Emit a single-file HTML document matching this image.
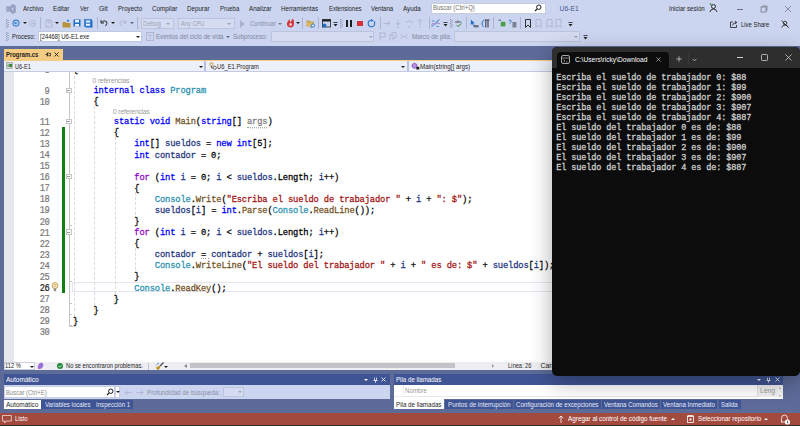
<!DOCTYPE html>
<html><head><meta charset="utf-8">
<style>
*{margin:0;padding:0;box-sizing:border-box}
html,body{width:800px;height:426px;overflow:hidden;background:#ccd5f0;font-family:"Liberation Sans",sans-serif;position:relative}
.a{position:absolute;white-space:pre}
.ui{font-size:6.8px;color:#1e1e1e;line-height:8px}
.code{font-family:"Liberation Mono",monospace;font-size:8.8px;letter-spacing:-0.16px;transform:scaleY(1.12);transform-origin:0 8.4px;line-height:11px;color:#000;-webkit-text-stroke:0.25px currentColor}
.k{color:#0000ff}.t{color:#2b91af}.m{color:#74531f}.c{color:#8f08c4}.v{color:#1f377f}.s{color:#a31515}.p{color:#808080}
.ln{font-family:"Liberation Mono",monospace;font-size:8.8px;letter-spacing:-0.45px;transform:scaleY(1.22);transform-origin:0 8.4px;color:#7a7a7a;-webkit-text-stroke:0.2px currentColor;text-align:right;width:40px;line-height:11px}
.hint{font-size:6.6px;color:#999999;line-height:8px}
.con{font-family:"Liberation Mono",monospace;font-size:8.5px;letter-spacing:-0.1px;color:#cccccc;line-height:10px;-webkit-text-stroke:0.3px #cccccc}
</style></head><body>
<div class="a ui" style="left:22.50px;top:4.5px;;transform:scaleX(0.9040);transform-origin:0 0">Archivo</div>
<div class="a ui" style="left:53.25px;top:4.5px;;transform:scaleX(0.9156);transform-origin:0 0">Editar</div>
<div class="a ui" style="left:80.00px;top:4.5px;;transform:scaleX(0.8578);transform-origin:0 0">Ver</div>
<div class="a ui" style="left:98.75px;top:4.5px;;transform:scaleX(1.0053);transform-origin:0 0">Git</div>
<div class="a ui" style="left:117.50px;top:4.5px;;transform:scaleX(0.9040);transform-origin:0 0">Proyecto</div>
<div class="a ui" style="left:151.75px;top:4.5px;;transform:scaleX(0.9283);transform-origin:0 0">Compilar</div>
<div class="a ui" style="left:187.00px;top:4.5px;;transform:scaleX(0.9153);transform-origin:0 0">Depurar</div>
<div class="a ui" style="left:219.50px;top:4.5px;;transform:scaleX(0.8764);transform-origin:0 0">Prueba</div>
<div class="a ui" style="left:248.75px;top:4.5px;;transform:scaleX(0.9153);transform-origin:0 0">Analizar</div>
<div class="a ui" style="left:281.25px;top:4.5px;;transform:scaleX(0.9069);transform-origin:0 0">Herramientas</div>
<div class="a ui" style="left:328.75px;top:4.5px;;transform:scaleX(0.8770);transform-origin:0 0">Extensiones</div>
<div class="a ui" style="left:370.75px;top:4.5px;;transform:scaleX(0.8904);transform-origin:0 0">Ventana</div>
<div class="a ui" style="left:403.00px;top:4.5px;;transform:scaleX(0.9256);transform-origin:0 0">Ayuda</div>
<svg class="a" style="left:5px;top:3px" width="12" height="12" viewBox="0 0 12 12"><path d="M1.2 4.2 L2.8 2.8 L4.5 3.8 L7.5 1 L10.8 2.5 V9.5 L7.5 11 L4.5 8.2 L2.8 9.2 L1.2 7.8Z M2.6 5 V7 L3.6 6Z M8.2 4.3 L6.3 6 L8.2 7.7Z" fill="#98a1c4" fill-rule="evenodd"/></svg>
<div class="a" style="left:431px;top:2.6px;width:114.6px;height:11.6px;background:#ffffff;border:1px solid #c5cbdc"></div>
<div class="a ui" style="left:433.40px;top:4.3px;color:#717171;transform:scaleX(0.8824);transform-origin:0 0">Buscar (Ctrl+Q)</div>
<svg class="a" style="left:534px;top:4px" width="8" height="8" viewBox="0 0 8 8"><circle cx="4.8" cy="3.2" r="2.2" fill="none" stroke="#1e1e1e" stroke-width="1"/><path d="M3.2 4.8 L1 7" stroke="#1e1e1e" stroke-width="1.2"/></svg>
<div class="a ui" style="left:559.50px;top:4.5px;color:#45568c">U6-E1</div>
<div class="a ui" style="left:668.75px;top:4.5px;;transform:scaleX(0.9010);transform-origin:0 0">Iniciar sesión</div>
<svg class="a" style="left:709px;top:3px" width="9" height="10" viewBox="0 0 9 10"><circle cx="4.5" cy="3.5" r="2" fill="none" stroke="#1e1e1e" stroke-width=".9"/><path d="M1 9 Q1.5 6 4.5 6 Q7.5 6 8 9" fill="none" stroke="#1e1e1e" stroke-width=".9"/><path d="M1 0.5 L2.5 2" stroke="#388a34" stroke-width="1.2"/></svg>
<div class="a" style="left:737px;top:8.6px;width:5.5px;height:0.7px;background:#6a6f80;"></div>
<svg class="a" style="left:760px;top:5px" width="8" height="8" viewBox="0 0 8 8"><rect x="1" y="2" width="5" height="5" fill="none" stroke="#6a6f80" stroke-width=".7"/><path d="M2.5 2 V1 H7 V5.5 H6" fill="none" stroke="#6a6f80" stroke-width=".7"/></svg>
<svg class="a" style="left:784px;top:5px" width="8" height="8" viewBox="0 0 8 8"><path d="M1 1 L7 7 M7 1 L1 7" stroke="#6a6f80" stroke-width=".7"/></svg>
<svg class="a" style="left:5.5px;top:19px" width="3" height="9" viewBox="0 0 3 9"><rect x="0.0" y="0.0" width="1.2" height="1" fill="#8c95b4"/><rect x="1.5" y="1.0" width="1.2" height="1" fill="#8c95b4"/><rect x="0.0" y="2.0" width="1.2" height="1" fill="#8c95b4"/><rect x="1.5" y="3.0" width="1.2" height="1" fill="#8c95b4"/><rect x="0.0" y="4.0" width="1.2" height="1" fill="#8c95b4"/><rect x="1.5" y="5.0" width="1.2" height="1" fill="#8c95b4"/><rect x="0.0" y="6.0" width="1.2" height="1" fill="#8c95b4"/><rect x="1.5" y="7.0" width="1.2" height="1" fill="#8c95b4"/><rect x="0.0" y="8.0" width="1.2" height="1" fill="#8c95b4"/></svg>
<svg class="a" style="left:11.5px;top:19px" width="8" height="8" viewBox="0 0 8 8"><circle cx="4" cy="4" r="3.5" fill="#1f6fc5"/><circle cx="4" cy="4" r="2.6" fill="#ccd5f0"/><path d="M5.5 4 H2.5 M4 2.5 L2.5 4 L4 5.5" stroke="#1f6fc5" stroke-width=".9" fill="none"/></svg>
<div class="a" style="left:22.5px;top:22px;width:0;height:0;border-left:2px solid transparent;border-right:2px solid transparent;border-top:2.5px solid #1e1e1e"></div>
<svg class="a" style="left:29px;top:19.5px" width="7" height="7" viewBox="0 0 7 7"><circle cx="3.5" cy="3.5" r="3" fill="none" stroke="#a9b0c6" stroke-width=".7"/><path d="M2 3.5 H5 M3.8 2.3 L5 3.5 L3.8 4.7" stroke="#a9b0c6" stroke-width=".7" fill="none"/></svg>
<div class="a" style="left:40px;top:17px;width:1px;height:12px;background:#aab3d0;"></div>
<svg class="a" style="left:45px;top:18.5px" width="8" height="9" viewBox="0 0 8 9"><path d="M1 1 H6 L7 2 V8 H1Z" fill="none" stroke="#a9b0c6" stroke-width=".8"/><path d="M3 1 V4 H5 V1" fill="none" stroke="#a9b0c6" stroke-width=".7"/></svg>
<div class="a" style="left:55px;top:22px;width:0;height:0;border-left:2px solid transparent;border-right:2px solid transparent;border-top:2.5px solid #1e1e1e"></div>
<svg class="a" style="left:62px;top:18.5px" width="9" height="9" viewBox="0 0 9 9"><path d="M0.5 3 H3.5 L4.5 4 H8.5 V8.5 H0.5Z" fill="#b8913a"/><path d="M6 0.5 V3 M4.8 1.8 H7.2" stroke="#1f6fc5" stroke-width=".9"/></svg>
<svg class="a" style="left:73px;top:19px" width="8" height="8" viewBox="0 0 8 8"><rect x=".5" y=".5" width="7" height="7" fill="#1f6fc5"/><rect x="2" y="1" width="4" height="2.5" fill="#e8eefc"/><rect x="2" y="5" width="4" height="2.5" fill="#e8eefc"/></svg>
<svg class="a" style="left:84px;top:19px" width="9" height="9" viewBox="0 0 9 9"><rect x="1.5" y="1.5" width="7" height="7" fill="#1f6fc5"/><rect x=".5" y=".5" width="7" height="7" fill="#3a82d0" stroke="#1f6fc5" stroke-width=".6"/><rect x="2" y="1.5" width="4" height="2" fill="#e8eefc"/><rect x="2" y="4.8" width="4" height="2" fill="#e8eefc"/></svg>
<div class="a" style="left:96.5px;top:17px;width:1px;height:12px;background:#aab3d0;"></div>
<svg class="a" style="left:100px;top:19px" width="8" height="8" viewBox="0 0 8 8"><path d="M1 1 V4 H4" fill="none" stroke="#1e1e1e" stroke-width=".9"/><path d="M1.3 3.7 Q4 0.5 6.5 2.5 Q7.8 4.5 5.5 7" fill="none" stroke="#1e1e1e" stroke-width=".9"/></svg>
<div class="a" style="left:111px;top:22px;width:0;height:0;border-left:2px solid transparent;border-right:2px solid transparent;border-top:2.5px solid #1e1e1e"></div>
<svg class="a" style="left:119px;top:19px" width="8" height="8" viewBox="0 0 8 8"><path d="M7 1 V4 H4" fill="none" stroke="#a9b0c6" stroke-width=".8"/><path d="M6.7 3.7 Q4 0.5 1.5 2.5 Q.2 4.5 2.5 7" fill="none" stroke="#a9b0c6" stroke-width=".8"/></svg>
<div class="a" style="left:130px;top:22px;width:0;height:0;border-left:2px solid transparent;border-right:2px solid transparent;border-top:2.5px solid #5a6078"></div>
<div class="a" style="left:136.5px;top:17px;width:1px;height:12px;background:#aab3d0;"></div>
<div class="a" style="left:141.25px;top:18.1px;width:33.15px;height:10.9px;background:#d5dcf2;border:1px solid #bcc4dc"></div>
<div class="a ui" style="left:143.10px;top:19.5px;color:#9aa2b8;transform:scaleX(0.8938);transform-origin:0 0">Debug</div>
<div class="a" style="left:166px;top:22.5px;width:0;height:0;border-left:2px solid transparent;border-right:2px solid transparent;border-top:2.5px solid #9aa2b8"></div>
<div class="a" style="left:178.4px;top:18.1px;width:56.6px;height:10.9px;background:#d5dcf2;border:1px solid #bcc4dc"></div>
<div class="a ui" style="left:180.60px;top:19.5px;color:#9aa2b8;transform:scaleX(0.8408);transform-origin:0 0">Any CPU</div>
<div class="a" style="left:227px;top:22.5px;width:0;height:0;border-left:2px solid transparent;border-right:2px solid transparent;border-top:2.5px solid #9aa2b8"></div>
<div class="a" style="left:240px;top:19.5px;width:0;height:0;border-top:4px solid transparent;border-bottom:4px solid transparent;border-left:5.5px solid #aab1c8"></div>
<div class="a ui" style="left:250.00px;top:19.5px;color:#8a90a6;transform:scaleX(0.8786);transform-origin:0 0">Continuar</div>
<div class="a" style="left:278.3px;top:22.5px;width:0;height:0;border-left:2px solid transparent;border-right:2px solid transparent;border-top:2.5px solid #70768a"></div>
<svg class="a" style="left:285.5px;top:18px" width="9" height="10" viewBox="0 0 9 10"><path d="M4.5 9.5 Q0.5 9 1 5.5 Q1.5 3 3.5 1 Q3.5 4 5 4 Q5 2 7 .5 Q8.5 3.5 8 6 Q7.5 9.5 4.5 9.5Z" fill="#d13438"/><circle cx="4.6" cy="6.5" r="1.4" fill="#f3c4c4"/></svg>
<div class="a" style="left:295.75px;top:22px;width:0;height:0;border-left:2px solid transparent;border-right:2px solid transparent;border-top:2.5px solid #1e1e1e"></div>
<div class="a" style="left:302.25px;top:17px;width:1px;height:12px;background:#aab3d0;"></div>
<svg class="a" style="left:306px;top:18.5px" width="10" height="10" viewBox="0 0 10 10"><path d="M.5 1.5 H3.5 L4.5 2.5 H8 V7.5 H.5Z" fill="#c4a050"/><path d="M.5 3.5 H8 V7.5 H.5Z" fill="#d8b868"/><circle cx="7" cy="6.5" r="1.6" fill="#e8eefc" stroke="#1f6fc5" stroke-width=".9"/><path d="M5.8 7.8 L4.8 8.9" stroke="#1f6fc5" stroke-width="1"/></svg>
<div class="a" style="left:318.4px;top:17px;width:1px;height:12px;background:#aab3d0;"></div>
<svg class="a" style="left:322px;top:18.5px" width="9" height="9" viewBox="0 0 9 9"><rect x=".5" y=".5" width="8" height="7.5" fill="none" stroke="#1e1e1e" stroke-width=".8"/><rect x=".5" y=".5" width="8" height="2" fill="#1e1e1e"/><circle cx="2.5" cy="6.5" r="2" fill="#1f6fc5"/></svg>
<svg class="a" style="left:333px;top:22px" width="5" height="6" viewBox="0 0 5 6"><rect x=".5" y="0" width="4" height=".8" fill="#1e1e1e"/><path d="M.5 2 H4.5 L2.5 4.5Z" fill="#1e1e1e"/></svg>
<svg class="a" style="left:339.5px;top:19px" width="3" height="9" viewBox="0 0 3 9"><rect x="0.0" y="0.0" width="1.2" height="1" fill="#8c95b4"/><rect x="1.5" y="1.0" width="1.2" height="1" fill="#8c95b4"/><rect x="0.0" y="2.0" width="1.2" height="1" fill="#8c95b4"/><rect x="1.5" y="3.0" width="1.2" height="1" fill="#8c95b4"/><rect x="0.0" y="4.0" width="1.2" height="1" fill="#8c95b4"/><rect x="1.5" y="5.0" width="1.2" height="1" fill="#8c95b4"/><rect x="0.0" y="6.0" width="1.2" height="1" fill="#8c95b4"/><rect x="1.5" y="7.0" width="1.2" height="1" fill="#8c95b4"/><rect x="0.0" y="8.0" width="1.2" height="1" fill="#8c95b4"/></svg>
<div class="a" style="left:346.3px;top:20.3px;width:1.8px;height:6.3px;background:#1e1e1e;"></div>
<div class="a" style="left:349.8px;top:20.3px;width:1.8px;height:6.3px;background:#1e1e1e;"></div>
<div class="a" style="left:357.4px;top:20.6px;width:5.6px;height:5.6px;background:#d13438;"></div>
<svg class="a" style="left:367px;top:18.5px" width="9" height="9" viewBox="0 0 9 9"><path d="M6.8 2.2 A3.3 3.3 0 1 1 4.5 1.2" fill="none" stroke="#1f6fc5" stroke-width="1.1"/><path d="M4 .0 L6.5 1.2 L4.3 3Z" fill="#1f6fc5"/></svg>
<div class="a" style="left:379.7px;top:17px;width:1px;height:12px;background:#aab3d0;"></div>
<svg class="a" style="left:383px;top:19.5px" width="8" height="7" viewBox="0 0 8 7"><path d="M.5 3.5 H7 M4.5 1 L7 3.5 L4.5 6" fill="none" stroke="#a9b0c6" stroke-width=".8"/></svg>
<svg class="a" style="left:395px;top:18.5px" width="6" height="9" viewBox="0 0 6 9"><path d="M3 .5 V6 M1 4 L3 6 L5 4" fill="none" stroke="#a9b0c6" stroke-width=".8"/><circle cx="3" cy="8" r=".8" fill="#a9b0c6"/></svg>
<svg class="a" style="left:405px;top:18.5px" width="8" height="9" viewBox="0 0 8 9"><path d="M1 4 Q4 0 7 4 M5.5 2.5 L7 4 L7.2 2" fill="none" stroke="#a9b0c6" stroke-width=".8"/><circle cx="4" cy="8" r=".8" fill="#a9b0c6"/></svg>
<svg class="a" style="left:417px;top:18.5px" width="6" height="9" viewBox="0 0 6 9"><path d="M3 6 V.5 M1 2.5 L3 .5 L5 2.5" fill="none" stroke="#a9b0c6" stroke-width=".8"/><circle cx="3" cy="8" r=".8" fill="#a9b0c6"/></svg>
<div class="a" style="left:428.75px;top:17px;width:1px;height:12px;background:#aab3d0;"></div>
<svg class="a" style="left:431px;top:18.5px" width="9" height="9" viewBox="0 0 9 9"><path d="M.5 6 L2.5 4 L4 5.5 L6 3.5 L7.5 5 L8.5 4" fill="none" stroke="#8f4fc4" stroke-width=".8"/><path d="M.5 8 L3 5.5 M4.5 4 L8.5 .5" fill="none" stroke="#1f6fc5" stroke-width=".9"/><path d="M1 2 H3.5 M5.5 7.5 H8" stroke="#1f6fc5" stroke-width=".7"/></svg>
<svg class="a" style="left:443px;top:22px" width="5" height="6" viewBox="0 0 5 6"><rect x=".5" y="0" width="4" height=".8" fill="#1e1e1e"/><path d="M.5 2 H4.5 L2.5 4.5Z" fill="#1e1e1e"/></svg>
<svg class="a" style="left:449.8px;top:19px" width="3" height="9" viewBox="0 0 3 9"><rect x="0.0" y="0.0" width="1.2" height="1" fill="#8c95b4"/><rect x="1.5" y="1.0" width="1.2" height="1" fill="#8c95b4"/><rect x="0.0" y="2.0" width="1.2" height="1" fill="#8c95b4"/><rect x="1.5" y="3.0" width="1.2" height="1" fill="#8c95b4"/><rect x="0.0" y="4.0" width="1.2" height="1" fill="#8c95b4"/><rect x="1.5" y="5.0" width="1.2" height="1" fill="#8c95b4"/><rect x="0.0" y="6.0" width="1.2" height="1" fill="#8c95b4"/><rect x="1.5" y="7.0" width="1.2" height="1" fill="#8c95b4"/><rect x="0.0" y="8.0" width="1.2" height="1" fill="#8c95b4"/></svg>
<svg class="a" style="left:454.5px;top:18.5px" width="8" height="9" viewBox="0 0 8 9"><text x="0" y="4" font-size="4" font-family="Liberation Sans" fill="#1e1e1e">abc</text><path d="M1.5 6 L3 7.5 L6.5 4.5" stroke="#388a34" stroke-width="1" fill="none"/></svg>
<div class="a" style="left:466.25px;top:17px;width:1px;height:12px;background:#aab3d0;"></div>
<svg class="a" style="left:470px;top:18.5px" width="9" height="9" viewBox="0 0 9 9"><path d="M.8 .5 V6 L2.2 4.8 L3.4 7 L4.2 6.6 L3.1 4.4 L4.8 4.3Z" fill="#1f6fc5"/><rect x="3.5" y="6" width="5.2" height="2.6" rx=".8" fill="#6d7388"/></svg>
<svg class="a" style="left:481px;top:18.5px" width="9" height="9" viewBox="0 0 9 9"><path d="M2.8 1.2 Q.8 2.5 1 5 Q1.2 7 2.8 8" fill="none" stroke="#1f6fc5" stroke-width="1"/><path d="M1.8 1 L3.3 .8 L3 2.3Z" fill="#1f6fc5"/><path d="M3.8 1 H8.5 M4.8 1 V8.5 M7 1 V8.5" stroke="#3c3c50" stroke-width="1.1"/></svg>
<div class="a" style="left:493.4px;top:17px;width:1px;height:12px;background:#aab3d0;"></div>
<svg class="a" style="left:497.5px;top:19px" width="8" height="8" viewBox="0 0 8 8"><path d="M.5 1.2 H3" stroke="#3c3c50" stroke-width=".8"/><rect x="2.8" y="2.8" width="4.6" height="4.6" fill="#4aa04a"/></svg>
<svg class="a" style="left:507.5px;top:18.5px" width="9" height="9" viewBox="0 0 9 9"><path d="M.8 1.8 Q1.8 .5 3 1.5 Q3.6 2.5 2.4 3.4 L2 4.6" fill="none" stroke="#1f6fc5" stroke-width=".9"/><rect x="4.4" y="3" width="4" height="5.5" fill="#7d8294"/></svg>
<div class="a" style="left:519.7px;top:17px;width:1px;height:12px;background:#aab3d0;"></div>
<svg class="a" style="left:524.5px;top:18.5px" width="6" height="9" viewBox="0 0 6 9"><path d="M.5 .5 H5.5 V8.5 L3 6 L.5 8.5Z" fill="none" stroke="#1e1e1e" stroke-width=".9"/></svg>
<svg class="a" style="left:534.7px;top:18.5px" width="7" height="9" viewBox="0 0 7 9"><path d="M1 .5 H6 V8.5 L3.5 6 L1 8.5Z" fill="none" stroke="#a9b0c6" stroke-width=".8"/></svg>
<svg class="a" style="left:546px;top:18.5px" width="7" height="9" viewBox="0 0 7 9"><path d="M1 .5 H6 V8.5 L3.5 6 L1 8.5Z" fill="none" stroke="#a9b0c6" stroke-width=".8"/></svg>
<svg class="a" style="left:555px;top:18.5px" width="7" height="9" viewBox="0 0 7 9"><path d="M1 .5 H6 V8.5 L3.5 6 L1 8.5Z" fill="none" stroke="#a9b0c6" stroke-width=".8"/></svg>
<svg class="a" style="left:568px;top:22px" width="5" height="6" viewBox="0 0 5 6"><rect x=".5" y="0" width="4" height=".8" fill="#1e1e1e"/><path d="M.5 2 H4.5 L2.5 4.5Z" fill="#1e1e1e"/></svg>
<svg class="a" style="left:730px;top:20px" width="8" height="8" viewBox="0 0 8 8"><path d="M3 2 H.5 V7.5 H6.5 V5" fill="none" stroke="#1e1e1e" stroke-width=".8"/><path d="M2.5 5.5 Q3 2.5 6.5 2.5 M5 1 L6.8 2.5 L5 4" fill="none" stroke="#1e1e1e" stroke-width=".8"/></svg>
<div class="a ui" style="left:740.50px;top:20.5px;;transform:scaleX(0.8691);transform-origin:0 0">Live Share</div>
<svg class="a" style="left:781px;top:19.5px" width="8" height="8" viewBox="0 0 8 8"><circle cx="4" cy="3" r="1.8" fill="none" stroke="#1e1e1e" stroke-width=".8"/><path d="M.8 7.5 Q1.5 5 4 5 Q6.5 5 7.2 7.5" fill="none" stroke="#1e1e1e" stroke-width=".8"/><path d="M.5 .5 L7.5 7.5" stroke="#1e1e1e" stroke-width=".7"/></svg>
<svg class="a" style="left:5.5px;top:32px" width="3" height="9" viewBox="0 0 3 9"><rect x="0.0" y="0.0" width="1.2" height="1" fill="#8c95b4"/><rect x="1.5" y="1.0" width="1.2" height="1" fill="#8c95b4"/><rect x="0.0" y="2.0" width="1.2" height="1" fill="#8c95b4"/><rect x="1.5" y="3.0" width="1.2" height="1" fill="#8c95b4"/><rect x="0.0" y="4.0" width="1.2" height="1" fill="#8c95b4"/><rect x="1.5" y="5.0" width="1.2" height="1" fill="#8c95b4"/><rect x="0.0" y="6.0" width="1.2" height="1" fill="#8c95b4"/><rect x="1.5" y="7.0" width="1.2" height="1" fill="#8c95b4"/><rect x="0.0" y="8.0" width="1.2" height="1" fill="#8c95b4"/></svg>
<div class="a ui" style="left:11.60px;top:32.5px;;transform:scaleX(0.8611);transform-origin:0 0">Proceso:</div>
<div class="a" style="left:38.4px;top:31.25px;width:103.2px;height:10.5px;background:#ffffff;border:1px solid #c0c8e0"></div>
<div class="a ui" style="left:40.30px;top:32.5px;;transform:scaleX(0.8693);transform-origin:0 0">[24468] U6-E1.exe</div>
<div class="a" style="left:136px;top:36px;width:0;height:0;border-left:2px solid transparent;border-right:2px solid transparent;border-top:2.5px solid #1e1e1e"></div>
<svg class="a" style="left:146px;top:32px" width="8" height="9" viewBox="0 0 8 9"><rect x=".5" y=".5" width="7" height="8" fill="none" stroke="#a9b0c6" stroke-width=".8"/><path d="M2 3 H6 M4 3 V7" stroke="#a9b0c6" stroke-width=".7"/></svg>
<div class="a ui" style="left:156.25px;top:32.5px;color:#80869b;transform:scaleX(0.9016);transform-origin:0 0">Eventos del ciclo de vida</div>
<div class="a" style="left:226.4px;top:36px;width:0;height:0;border-left:2px solid transparent;border-right:2px solid transparent;border-top:2.5px solid #5a6075"></div>
<div class="a ui" style="left:233.00px;top:32.5px;color:#80869b;transform:scaleX(0.8905);transform-origin:0 0">Subproceso:</div>
<div class="a" style="left:270.6px;top:31.25px;width:103.8px;height:10.5px;background:#d5dcf2;border:1px solid #bcc4dc"></div>
<div class="a" style="left:369px;top:36px;width:0;height:0;border-left:2px solid transparent;border-right:2px solid transparent;border-top:2.5px solid #9aa2b8"></div>
<svg class="a" style="left:378.5px;top:32px" width="7" height="9" viewBox="0 0 7 9"><path d="M1 .5 V8.5 M1 1 H6 V5 H1" fill="none" stroke="#a9b0c6" stroke-width=".8"/></svg>
<svg class="a" style="left:389px;top:32px" width="8" height="9" viewBox="0 0 8 9"><path d="M1 8.5 V3 H4 V8.5 M3 3 V.5 H7 V6 H4" fill="none" stroke="#a9b0c6" stroke-width=".8"/></svg>
<svg class="a" style="left:400px;top:33px" width="8" height="7" viewBox="0 0 8 7"><path d="M.5 1 L3 3.5 L.5 6 M7.5 1 L5 3.5 L7.5 6 M3 3.5 H5" fill="none" stroke="#a9b0c6" stroke-width=".8"/></svg>
<div class="a ui" style="left:411.60px;top:32.5px;color:#80869b;transform:scaleX(0.9226);transform-origin:0 0">Marco de pila:</div>
<div class="a" style="left:454px;top:31.25px;width:125.5px;height:10.5px;background:#d5dcf2;border:1px solid #bcc4dc"></div>
<div class="a" style="left:574px;top:36px;width:0;height:0;border-left:2px solid transparent;border-right:2px solid transparent;border-top:2.5px solid #9aa2b8"></div>
<svg class="a" style="left:583px;top:35px" width="5" height="6" viewBox="0 0 5 6"><rect x=".5" y="0" width="4" height=".8" fill="#1e1e1e"/><path d="M.5 2 H4.5 L2.5 4.5Z" fill="#1e1e1e"/></svg>
<div class="a" style="left:0px;top:46px;width:800px;height:328px;background:#5d6b99;"></div>
<div class="a" style="left:3.75px;top:49.25px;width:59.1px;height:11px;background:#f5cc84;"></div>
<div class="a ui" style="left:6.00px;top:51.3px;font-weight:bold;color:#1e1e1e;font-size:6.3px;transform:scaleX(0.9342);transform-origin:0 0">Program.cs</div>
<svg class="a" style="left:44.5px;top:52px" width="6" height="5" viewBox="0 0 6 5"><path d="M.3 2.5 H2.2 M2.2 .6 V4.4" fill="none" stroke="#1e1e1e" stroke-width=".7"/><rect x="2.6" y="1.2" width="2.8" height="2.6" fill="none" stroke="#1e1e1e" stroke-width=".7"/></svg>
<svg class="a" style="left:54.3px;top:52px" width="5" height="5" viewBox="0 0 5 5"><path d="M.5 .5 L4.5 4.5 M4.5 .5 L.5 4.5" stroke="#2a2a2a" stroke-width=".95"/></svg>
<div class="a" style="left:4px;top:60px;width:796px;height:1px;background:#f5cc84;"></div>
<div class="a" style="left:4px;top:72px;width:548px;height:289.6px;background:#ffffff;"></div>
<div class="a" style="left:4px;top:72px;width:9.8px;height:289.6px;background:#e6e7ec;"></div>
<div class="a" style="left:69px;top:72px;width:0.8px;height:254.6px;background:#c4c4c4;"></div>
<div class="a" style="left:69px;top:326px;width:4px;height:0.8px;background:#c4c4c4;"></div>
<div class="a" style="left:66.2px;top:87.5px;width:5.4px;height:5.4px;border:0.8px solid #c4c4c4;background:#fff"></div>
<div class="a" style="left:67.3px;top:89.85000000000001px;width:3.2px;height:0.8px;background:#9a9a9a;"></div>
<div class="a" style="left:66.2px;top:118.5px;width:5.4px;height:5.4px;border:0.8px solid #c4c4c4;background:#fff"></div>
<div class="a" style="left:67.3px;top:120.85000000000001px;width:3.2px;height:0.8px;background:#9a9a9a;"></div>
<div class="a" style="left:66.2px;top:173.9px;width:5.4px;height:5.4px;border:0.8px solid #c4c4c4;background:#fff"></div>
<div class="a" style="left:67.3px;top:176.25px;width:3.2px;height:0.8px;background:#9a9a9a;"></div>
<div class="a" style="left:66.2px;top:229.3px;width:5.4px;height:5.4px;border:0.8px solid #c4c4c4;background:#fff"></div>
<div class="a" style="left:67.3px;top:231.65px;width:3.2px;height:0.8px;background:#9a9a9a;"></div>
<div class="a" style="left:69px;top:225.42000000000002px;width:3px;height:0.7px;background:#c4c4c4;"></div>
<div class="a" style="left:69px;top:280.82px;width:3px;height:0.7px;background:#c4c4c4;"></div>
<div class="a" style="left:69px;top:302.98px;width:3px;height:0.7px;background:#c4c4c4;"></div>
<div class="a" style="left:69px;top:314.06px;width:3px;height:0.7px;background:#c4c4c4;"></div>
<div class="a" style="left:69px;top:325.14px;width:3px;height:0.7px;background:#c4c4c4;"></div>
<div class="a" style="left:62px;top:126.7px;width:2.8px;height:166.3px;background:#108010;"></div>
<div class="a" style="left:72px;top:282.3px;width:490px;height:10px;border:1px solid #e4e6f2"></div>
<div class="a" style="left:73.8px;top:76px;width:0;height:250px;border-left:0.8px dashed #dadada"></div>
<div class="a" style="left:94.3px;top:106px;width:0;height:209px;border-left:0.8px dashed #dadada"></div>
<div class="a" style="left:114.8px;top:137px;width:0;height:167px;border-left:0.8px dashed #dadada"></div>
<div class="a" style="left:135.1px;top:192px;width:0;height:23px;border-left:0.8px dashed #dadada"></div>
<div class="a" style="left:135.1px;top:248px;width:0;height:22px;border-left:0.8px dashed #dadada"></div>
<div class="a ln" style="left:9.40px;top:86.8px;">9</div>
<div class="a ln" style="left:9.40px;top:97.8px;">10</div>
<div class="a ln" style="left:9.40px;top:117.8px;">11</div>
<div class="a ln" style="left:9.40px;top:128.88px;">12</div>
<div class="a ln" style="left:9.40px;top:139.96px;">13</div>
<div class="a ln" style="left:9.40px;top:151.04px;">14</div>
<div class="a ln" style="left:9.40px;top:162.12px;">15</div>
<div class="a ln" style="left:9.40px;top:173.2px;">16</div>
<div class="a ln" style="left:9.40px;top:184.28px;">17</div>
<div class="a ln" style="left:9.40px;top:195.35999999999999px;">18</div>
<div class="a ln" style="left:9.40px;top:206.44px;">19</div>
<div class="a ln" style="left:9.40px;top:217.52px;">20</div>
<div class="a ln" style="left:9.40px;top:228.6px;">21</div>
<div class="a ln" style="left:9.40px;top:239.67999999999998px;">22</div>
<div class="a ln" style="left:9.40px;top:250.76000000000002px;">23</div>
<div class="a ln" style="left:9.40px;top:261.84000000000003px;">24</div>
<div class="a ln" style="left:9.40px;top:272.92px;">25</div>
<div class="a ln" style="left:9.40px;top:284.0px;color:#1e1e1e">26</div>
<div class="a ln" style="left:9.40px;top:295.08000000000004px;">27</div>
<div class="a ln" style="left:9.40px;top:306.16px;">28</div>
<div class="a ln" style="left:9.40px;top:317.24px;">29</div>
<div class="a ln" style="left:9.40px;top:328.32000000000005px;">30</div>
<div class="a ln" style="left:9.40px;top:66.0px;">8</div>
<div class="a hint" style="left:92.60px;top:77px;letter-spacing:-0.1px">0 referencias</div>
<div class="a hint" style="left:113.00px;top:107.7px;letter-spacing:-0.1px">0 referencias</div>
<div class="a code" style="left:72.90px;top:65.3px;">{</div>
<div class="a code" style="left:93.38px;top:86.3px;"><span class="k">internal</span> <span class="k">class</span> <span class="t">Program</span></div>
<div class="a code" style="left:93.38px;top:97.3px;">{</div>
<div class="a code" style="left:113.86px;top:117.3px;"><span class="k">static</span> <span class="k">void</span> <span class="m">Main</span>(<span class="k">string</span>[] <span class="p" style="border-bottom:1px dotted #9a9a9a">args</span>)</div>
<div class="a code" style="left:113.86px;top:128.38px;">{</div>
<div class="a code" style="left:134.34px;top:139.46px;"><span class="k">int</span>[] <span class="v">sueldos</span> = <span class="k">new</span> <span class="k">int</span>[5];</div>
<div class="a code" style="left:134.34px;top:150.54px;"><span class="k">int</span> <span class="v">contador</span> = 0;</div>
<div class="a code" style="left:134.34px;top:172.7px;"><span class="c">for</span> (<span class="k">int</span> <span class="v">i</span> = 0; <span class="v">i</span> &lt; <span class="v">sueldos</span>.Length; <span class="v">i</span>++)</div>
<div class="a code" style="left:134.34px;top:183.78px;">{</div>
<div class="a code" style="left:154.82px;top:194.85999999999999px;"><span class="t">Console</span>.<span class="m">Write</span>(<span class="s">&quot;Escriba el sueldo de trabajador &quot;</span> + <span class="v">i</span> + <span class="s">&quot;: $&quot;</span>);</div>
<div class="a code" style="left:154.82px;top:205.94px;"><span class="v">sueldos</span>[<span class="v">i</span>] = <span class="k">int</span>.<span class="m">Parse</span>(<span class="t">Console</span>.<span class="m">ReadLine</span>());</div>
<div class="a code" style="left:134.34px;top:217.02px;">}</div>
<div class="a code" style="left:134.34px;top:228.1px;"><span class="c">for</span> (<span class="k">int</span> <span class="v">i</span> = 0; <span class="v">i</span> &lt; <span class="v">sueldos</span>.Length; <span class="v">i</span>++)</div>
<div class="a code" style="left:134.34px;top:239.17999999999998px;">{</div>
<div class="a code" style="left:154.82px;top:250.26000000000002px;"><span class="v">contador</span> = <span class="v">contador</span> + <span class="v">sueldos</span>[<span class="v">i</span>];</div>
<div class="a code" style="left:154.82px;top:261.34000000000003px;"><span class="t">Console</span>.<span class="m">WriteLine</span>(<span class="s">&quot;El sueldo del trabajador &quot;</span> + <span class="v">i</span> + <span class="s">&quot; es de: $&quot;</span> + <span class="v">sueldos</span>[<span class="v">i</span>]);</div>
<div class="a code" style="left:134.34px;top:272.42px;">}</div>
<div class="a code" style="left:134.34px;top:283.5px;"><span class="t">Console</span>.<span class="m">ReadKey</span>();</div>
<div class="a code" style="left:113.86px;top:294.58000000000004px;">}</div>
<div class="a code" style="left:93.38px;top:305.66px;">}</div>
<div class="a code" style="left:72.90px;top:316.74px;">}</div>
<div class="a" style="left:201px;top:258px;width:8.4px;height:0.9px;background:;background:repeating-linear-gradient(90deg,#9a9a9a 0 1px,transparent 1px 2.2px)"></div>
<svg class="a" style="left:50.8px;top:282px" width="8" height="10" viewBox="0 0 8 10"><circle cx="4" cy="3.6" r="3" fill="#f7efd6" stroke="#c9a552" stroke-width="1"/><circle cx="4" cy="3.6" r="1.2" fill="none" stroke="#c9a552" stroke-width=".7"/><rect x="2.8" y="6.6" width="2.4" height="2.6" fill="#8c8c8c"/></svg>
<div class="a" style="left:4px;top:61px;width:796px;height:10px;background:#eef0f9;"></div>
<div class="a" style="left:4px;top:71px;width:796px;height:1px;background:#c3cbe3;"></div>
<svg class="a" style="left:6px;top:62px" width="7" height="7" viewBox="0 0 7 7"><rect x=".3" y=".3" width="6.4" height="6.4" fill="#d0d0d0" stroke="#8a8a8a" stroke-width=".5"/><path d="M1.2 3.5 L2.5 2 V5Z" fill="#388a34"/><rect x="3.2" y="2" width="2.8" height="3" fill="#388a34"/></svg>
<div class="a ui" style="left:14.60px;top:62.5px;;transform:scaleX(0.8196);transform-origin:0 0">U6-E1</div>
<div class="a" style="left:199px;top:65.5px;width:0;height:0;border-left:2px solid transparent;border-right:2px solid transparent;border-top:2.5px solid #1e1e1e"></div>
<div class="a" style="left:204.2px;top:61px;width:2.3px;height:10px;background:#b7c2e0;"></div>
<svg class="a" style="left:208.5px;top:62px" width="8" height="8" viewBox="0 0 8 8"><path d="M1 1 H4 V4 H1Z" fill="none" stroke="#b8913a" stroke-width=".8"/><path d="M2.5 4 V6 H4" fill="none" stroke="#1e1e1e" stroke-width=".6"/><circle cx="5.8" cy="5.8" r="1.6" fill="none" stroke="#1e1e1e" stroke-width=".6"/></svg>
<div class="a ui" style="left:217.00px;top:62.5px;;transform:scaleX(0.8563);transform-origin:0 0">U6_E1.Program</div>
<div class="a" style="left:401.2px;top:65.5px;width:0;height:0;border-left:2px solid transparent;border-right:2px solid transparent;border-top:2.5px solid #1e1e1e"></div>
<div class="a" style="left:406.5px;top:61px;width:2.3px;height:10px;background:#b7c2e0;"></div>
<svg class="a" style="left:410.5px;top:62px" width="9" height="8" viewBox="0 0 9 8"><path d="M1 2.5 L3.5 1 L6 2.5 V5 L3.5 6.5 L1 5Z" fill="#b58ce0" stroke="#7b3fbf" stroke-width=".6"/><rect x="5.3" y="4.8" width="3" height="2.7" fill="#1e1e1e"/></svg>
<div class="a ui" style="left:419.80px;top:62.5px;;transform:scaleX(0.9159);transform-origin:0 0">Main(string[] args)</div>
<div class="a" style="left:4px;top:361.6px;width:548px;height:8.6px;background:#eeeef2;"></div>
<div class="a" style="left:4.1px;top:361.8px;width:30.6px;height:8.2px;background:#ffffff;border:1px solid #c9cfe0"></div>
<div class="a ui" style="left:5.25px;top:362.2px;;transform:scaleX(0.8392);transform-origin:0 0">112 %</div>
<div class="a" style="left:30px;top:365.5px;width:0;height:0;border-left:2px solid transparent;border-right:2px solid transparent;border-top:2.5px solid #1e1e1e"></div>
<svg class="a" style="left:36.5px;top:362px" width="7" height="8" viewBox="0 0 7 8"><path d="M1 7 Q0 3 3 1 Q6 0 6.5 3 Q6 6 3 7Z" fill="#9b6fd8"/></svg>
<svg class="a" style="left:57.2px;top:362.8px" width="6" height="6" viewBox="0 0 6 6"><circle cx="3" cy="3" r="3" fill="#1e8a3a"/><path d="M1.5 3 L2.6 4.1 L4.6 2" stroke="#fff" stroke-width=".8" fill="none"/></svg>
<div class="a ui" style="left:65.60px;top:362.2px;;transform:scaleX(0.8408);transform-origin:0 0">No se encontraron problemas.</div>
<div class="a" style="left:148.4px;top:362.5px;width:0.8px;height:7px;background:#c0c4d0;"></div>
<svg class="a" style="left:155px;top:361.5px" width="9" height="9" viewBox="0 0 9 9"><path d="M5 4 L8.5 .5" stroke="#3c3c50" stroke-width="1.1"/><path d="M4.8 3.2 L5.8 4.2 L3.2 8.5 L.5 5.8Z" fill="#d4a53c"/><path d="M2 7 L4 4.5 M3 7.8 L4.8 5" stroke="#8c6a20" stroke-width=".5"/><circle cx="3" cy="1.5" r=".7" fill="#1f6fc5"/><circle cx="1.5" cy="3" r=".5" fill="#1f6fc5"/></svg>
<div class="a" style="left:164px;top:365.5px;width:0;height:0;border-left:2px solid transparent;border-right:2px solid transparent;border-top:2.5px solid #1e1e1e"></div>
<div class="a" style="left:184px;top:364px;width:0;height:0;border-top:2px solid transparent;border-bottom:2px solid transparent;border-right:3px solid #8a8a8a"></div>
<div class="a" style="left:189.6px;top:363.4px;width:265.4px;height:4.35px;background:#c2c3c9;"></div>
<div class="a" style="left:491.5px;top:364px;width:0;height:0;border-top:2px solid transparent;border-bottom:2px solid transparent;border-left:2.5px solid #9a9a9a"></div>
<div class="a ui" style="left:508.00px;top:362.2px;;transform:scaleX(0.8199);transform-origin:0 0">Línea: 26</div>
<div class="a ui" style="left:540.50px;top:362.2px;">Carác</div>
<div class="a" style="left:0px;top:370px;width:800px;height:42.75px;background:#5d6b99;"></div>
<div class="a" style="left:4px;top:374.25px;width:385.85px;height:10.75px;background:#3f5494;"></div>
<div class="a ui" style="left:5.50px;top:376.2px;color:#ffffff;transform:scaleX(0.9623);transform-origin:0 0">Automático</div>
<div class="a" style="left:363.5px;top:379px;width:0;height:0;border-left:2px solid transparent;border-right:2px solid transparent;border-top:2.5px solid #ffffff"></div>
<svg class="a" style="left:372.5px;top:376.5px" width="5" height="6" viewBox="0 0 5 6"><path d="M1.5 .5 V3.5 H3.5 V.5 M.5 3.5 H4.5 M2.5 3.5 V5.8" fill="none" stroke="#fff" stroke-width=".7"/></svg>
<svg class="a" style="left:381px;top:377px" width="5" height="5" viewBox="0 0 5 5"><path d="M.5 .5 L4.5 4.5 M4.5 .5 L.5 4.5" stroke="#fff" stroke-width=".8"/></svg>
<div class="a" style="left:4px;top:385px;width:385.85px;height:13.75px;background:#ccd5f0;"></div>
<div class="a" style="left:4px;top:386.25px;width:110.5px;height:11.5px;background:#ffffff;border:1px solid #c9cfe0"></div>
<div class="a ui" style="left:6.25px;top:388.5px;color:#8a8a8a;transform:scaleX(0.8729);transform-origin:0 0">Buscar (Ctrl+E)</div>
<svg class="a" style="left:106px;top:388px" width="8" height="8" viewBox="0 0 8 8"><circle cx="4.8" cy="3.2" r="2.2" fill="none" stroke="#1e1e1e" stroke-width="1"/><path d="M3.2 4.8 L1 7" stroke="#1e1e1e" stroke-width="1.2"/></svg>
<div class="a" style="left:114.5px;top:386.25px;width:5.8px;height:11.5px;background:#ffffff;border:1px solid #c9cfe0"></div>
<div class="a" style="left:115.5px;top:391px;width:0;height:0;border-left:2px solid transparent;border-right:2px solid transparent;border-top:2.5px solid #1e1e1e"></div>
<svg class="a" style="left:123.5px;top:388.5px" width="8" height="7" viewBox="0 0 8 7"><path d="M7.5 3.5 H1 M3.5 1 L1 3.5 L3.5 6" fill="none" stroke="#a9b0c6" stroke-width=".8"/></svg>
<svg class="a" style="left:136px;top:388.5px" width="8" height="7" viewBox="0 0 8 7"><path d="M.5 3.5 H7 M4.5 1 L7 3.5 L4.5 6" fill="none" stroke="#a9b0c6" stroke-width=".8"/></svg>
<div class="a ui" style="left:147.00px;top:388.5px;color:#8a90a6;transform:scaleX(0.9152);transform-origin:0 0">Profundidad de búsqueda:</div>
<div class="a" style="left:223.25px;top:387px;width:20.5px;height:10px;background:#d5dcf2;border:1px solid #bcc4dc"></div>
<div class="a" style="left:238px;top:391px;width:0;height:0;border-left:2px solid transparent;border-right:2px solid transparent;border-top:2.5px solid #9aa2b8"></div>
<div class="a" style="left:3.75px;top:400px;width:37px;height:8.75px;background:#ffffff;"></div>
<div class="a ui" style="left:6.25px;top:400.5px;;transform:scaleX(0.9549);transform-origin:0 0">Automático</div>
<div class="a" style="left:41.25px;top:400px;width:51.25px;height:8.75px;background:#3f5494;"></div>
<div class="a ui" style="left:44.50px;top:400.5px;color:#e4e9f8;transform:scaleX(0.8939);transform-origin:0 0">Variables locales</div>
<div class="a" style="left:93.25px;top:400px;width:39.25px;height:8.75px;background:#3f5494;"></div>
<div class="a ui" style="left:96.25px;top:400.5px;color:#e4e9f8;transform:scaleX(0.8970);transform-origin:0 0">Inspección 1</div>
<div class="a" style="left:393.8px;top:374.25px;width:389.2px;height:10.75px;background:#3f5494;"></div>
<div class="a ui" style="left:396.00px;top:376.2px;color:#ffffff;transform:scaleX(0.9066);transform-origin:0 0">Pila de llamadas</div>
<div class="a" style="left:756.75px;top:379px;width:0;height:0;border-left:2px solid transparent;border-right:2px solid transparent;border-top:2.5px solid #ffffff"></div>
<svg class="a" style="left:765.5px;top:376.5px" width="5" height="6" viewBox="0 0 5 6"><path d="M1.5 .5 V3.5 H3.5 V.5 M.5 3.5 H4.5 M2.5 3.5 V5.8" fill="none" stroke="#fff" stroke-width=".7"/></svg>
<svg class="a" style="left:774.5px;top:377px" width="5" height="5" viewBox="0 0 5 5"><path d="M.5 .5 L4.5 4.5 M4.5 .5 L.5 4.5" stroke="#fff" stroke-width=".8"/></svg>
<div class="a" style="left:393.8px;top:385px;width:389.2px;height:13.75px;background:#ffffff;"></div>
<div class="a" style="left:402.5px;top:385px;width:0.6px;height:10px;background:#ececec;"></div>
<div class="a ui" style="left:405.00px;top:386.5px;color:#9a9a9a;transform:scaleX(0.9101);transform-origin:0 0">Nombre</div>
<div class="a" style="left:393.8px;top:395.5px;width:383.7px;height:0.6px;background:#e8e8e8;"></div>
<div class="a" style="left:757px;top:385px;width:21px;height:12px;background:#f0f0f0;border-left:1px solid #e0e0e0"></div>
<div class="a ui" style="left:760.00px;top:386.8px;color:#9a9a9a">Leng</div>
<div class="a" style="left:778px;top:385px;width:5px;height:12.75px;background:#f3f3f3;"></div>
<div class="a" style="left:779px;top:387px;width:0;height:0;border-left:1.5px solid transparent;border-right:1.5px solid transparent;border-bottom:2px solid #b0b0b0"></div>
<div class="a" style="left:779px;top:394.5px;width:0;height:0;border-left:1.5px solid transparent;border-right:1.5px solid transparent;border-top:2px solid #b0b0b0"></div>
<div class="a" style="left:393.8px;top:398.5px;width:49.95px;height:10.25px;background:#ffffff;"></div>
<div class="a ui" style="left:396.00px;top:400.5px;;transform:scaleX(0.9116);transform-origin:0 0">Pila de llamadas</div>
<div class="a" style="left:445px;top:400px;width:67.5px;height:8.75px;background:#3f5494;"></div>
<div class="a ui" style="left:447.50px;top:400.5px;color:#e4e9f8;transform:scaleX(0.9187);transform-origin:0 0">Puntos de interrupción</div>
<div class="a" style="left:513.5px;top:400px;width:87.0px;height:8.75px;background:#3f5494;"></div>
<div class="a ui" style="left:515.50px;top:400.5px;color:#e4e9f8;transform:scaleX(0.9054);transform-origin:0 0">Configuración de excepciones</div>
<div class="a" style="left:601.8px;top:400px;width:58.700000000000045px;height:8.75px;background:#3f5494;"></div>
<div class="a ui" style="left:603.75px;top:400.5px;color:#e4e9f8;transform:scaleX(0.8998);transform-origin:0 0">Ventana Comandos</div>
<div class="a" style="left:661.3px;top:400px;width:56.200000000000045px;height:8.75px;background:#3f5494;"></div>
<div class="a ui" style="left:663.00px;top:400.5px;color:#e4e9f8;transform:scaleX(0.9169);transform-origin:0 0">Ventana Inmediato</div>
<div class="a" style="left:718.5px;top:400px;width:22.0px;height:8.75px;background:#3f5494;"></div>
<div class="a ui" style="left:721.25px;top:400.5px;color:#e4e9f8;transform:scaleX(0.8845);transform-origin:0 0">Salida</div>
<div class="a" style="left:0px;top:412.75px;width:800px;height:12px;background:#a34a3f;"></div>
<div class="a" style="left:0px;top:424.75px;width:800px;height:1.25px;background:#2e2e2e;"></div>
<svg class="a" style="left:1.5px;top:414.5px" width="10" height="9" viewBox="0 0 10 9"><path d="M.5 .5 H9.3 V6 H4 L2.5 8 V6 H.5Z" fill="none" stroke="#f2dcd8" stroke-width=".8"/></svg>
<div class="a ui" style="left:14.50px;top:415px;color:#ffffff;transform:scaleX(0.8712);transform-origin:0 0">Listo</div>
<svg class="a" style="left:557.5px;top:414.5px" width="6" height="8" viewBox="0 0 6 8"><path d="M3 8 V1 M.8 3.2 L3 1 L5.2 3.2" fill="none" stroke="#fff" stroke-width=".8"/></svg>
<div class="a ui" style="left:568.00px;top:415px;color:#ffffff;transform:scaleX(0.9354);transform-origin:0 0">Agregar al control de código fuente</div>
<div class="a" style="left:670.5px;top:417.5px;width:0;height:0;border-left:2px solid transparent;border-right:2px solid transparent;border-bottom:2.5px solid #fff"></div>
<svg class="a" style="left:687px;top:414.5px" width="7" height="8" viewBox="0 0 7 8"><rect x=".5" y="1.5" width="6" height="6" fill="none" stroke="#fff" stroke-width=".8"/><path d="M.5 .5 H6.5" stroke="#fff" stroke-width=".8"/><rect x="2.5" y="3.5" width="2" height="2" fill="#fff"/></svg>
<div class="a ui" style="left:698.00px;top:415px;color:#ffffff;transform:scaleX(0.9146);transform-origin:0 0">Seleccionar repositorio</div>
<div class="a" style="left:764.25px;top:417.5px;width:0;height:0;border-left:2px solid transparent;border-right:2px solid transparent;border-bottom:2.5px solid #fff"></div>
<svg class="a" style="left:780px;top:413.5px" width="11" height="11" viewBox="0 0 11 11"><path d="M1.5 8 V4.5 Q1.5 1 4.5 1 Q7.5 1 7.5 4.5 V8 H1Z" fill="none" stroke="#fff" stroke-width=".8"/><circle cx="7.5" cy="8" r="2.6" fill="#fff"/><path d="M7.6 6.8 V9.3" stroke="#1e1e1e" stroke-width=".8"/></svg>
<div class="a" style="left:552.3px;top:46.8px;width:248px;height:329px;background:#0c0c0c;border-radius:5px;box-shadow:0 6px 22px 0 rgba(0,0,0,.32);overflow:hidden"><div class="a" style="left:0;top:0;width:260px;height:21px;background:#2e2e2e;border-bottom:0 solid #000"></div><div class="a" style="left:4.5px;top:5px;width:112.5px;height:16px;background:#0c0c0c;border-radius:4px 4px 0 0"></div></div>
<svg class="a" style="left:561px;top:55px" width="9" height="9" viewBox="0 0 9 9"><rect x=".5" y=".5" width="8" height="8" rx="1.5" fill="none" stroke="#b8b8b8" stroke-width=".9"/><path d="M.5 3 H8.5 M2.5 4.5 L4 5.8 L2.5 7 M5 7 H6.5" fill="none" stroke="#b8b8b8" stroke-width=".7"/></svg>
<div class="a ui" style="left:574.80px;top:56px;color:#ffffff;transform:scaleX(0.9730);transform-origin:0 0">C:\Users\ricky\Download</div>
<svg class="a" style="left:655.8px;top:56.8px" width="5" height="5" viewBox="0 0 5 5"><path d="M.5 .5 L4.5 4.5 M4.5 .5 L.5 4.5" stroke="#c8c8c8" stroke-width=".7"/></svg>
<svg class="a" style="left:676px;top:56px" width="6" height="6" viewBox="0 0 6 6"><path d="M3 .3 V5.7 M.3 3 H5.7" stroke="#c8c8c8" stroke-width=".8"/></svg>
<div class="a" style="left:687.5px;top:53.5px;width:0.7px;height:11px;background:#3a3a3a;"></div>
<svg class="a" style="left:692px;top:58px" width="5" height="4" viewBox="0 0 5 4"><path d="M.5 .8 L2.5 2.8 L4.5 .8" fill="none" stroke="#d0d0d0" stroke-width=".8"/></svg>
<div class="a" style="left:737px;top:56.5px;width:6px;height:0.8px;background:#d0d0d0;"></div>
<svg class="a" style="left:760.5px;top:53.5px" width="7" height="7" viewBox="0 0 7 7"><rect x=".5" y=".5" width="6" height="6" rx=".8" fill="none" stroke="#d0d0d0" stroke-width=".8"/></svg>
<svg class="a" style="left:784.5px;top:53.5px" width="7" height="7" viewBox="0 0 7 7"><path d="M.5 .5 L6.5 6.5 M6.5 .5 L.5 6.5" stroke="#d0d0d0" stroke-width=".8"/></svg>
<div class="a con" style="left:556.20px;top:73.1px;">Escriba el sueldo de trabajador 0: $88</div>
<div class="a con" style="left:556.20px;top:83.1px;">Escriba el sueldo de trabajador 1: $99</div>
<div class="a con" style="left:556.20px;top:93.1px;">Escriba el sueldo de trabajador 2: $900</div>
<div class="a con" style="left:556.20px;top:103.1px;">Escriba el sueldo de trabajador 3: $907</div>
<div class="a con" style="left:556.20px;top:113.1px;">Escriba el sueldo de trabajador 4: $887</div>
<div class="a con" style="left:556.20px;top:123.1px;">El sueldo del trabajador 0 es de: $88</div>
<div class="a con" style="left:556.20px;top:133.1px;">El sueldo del trabajador 1 es de: $99</div>
<div class="a con" style="left:556.20px;top:143.1px;">El sueldo del trabajador 2 es de: $900</div>
<div class="a con" style="left:556.20px;top:153.1px;">El sueldo del trabajador 3 es de: $907</div>
<div class="a con" style="left:556.20px;top:163.1px;">El sueldo del trabajador 4 es de: $887</div>
</body></html>
